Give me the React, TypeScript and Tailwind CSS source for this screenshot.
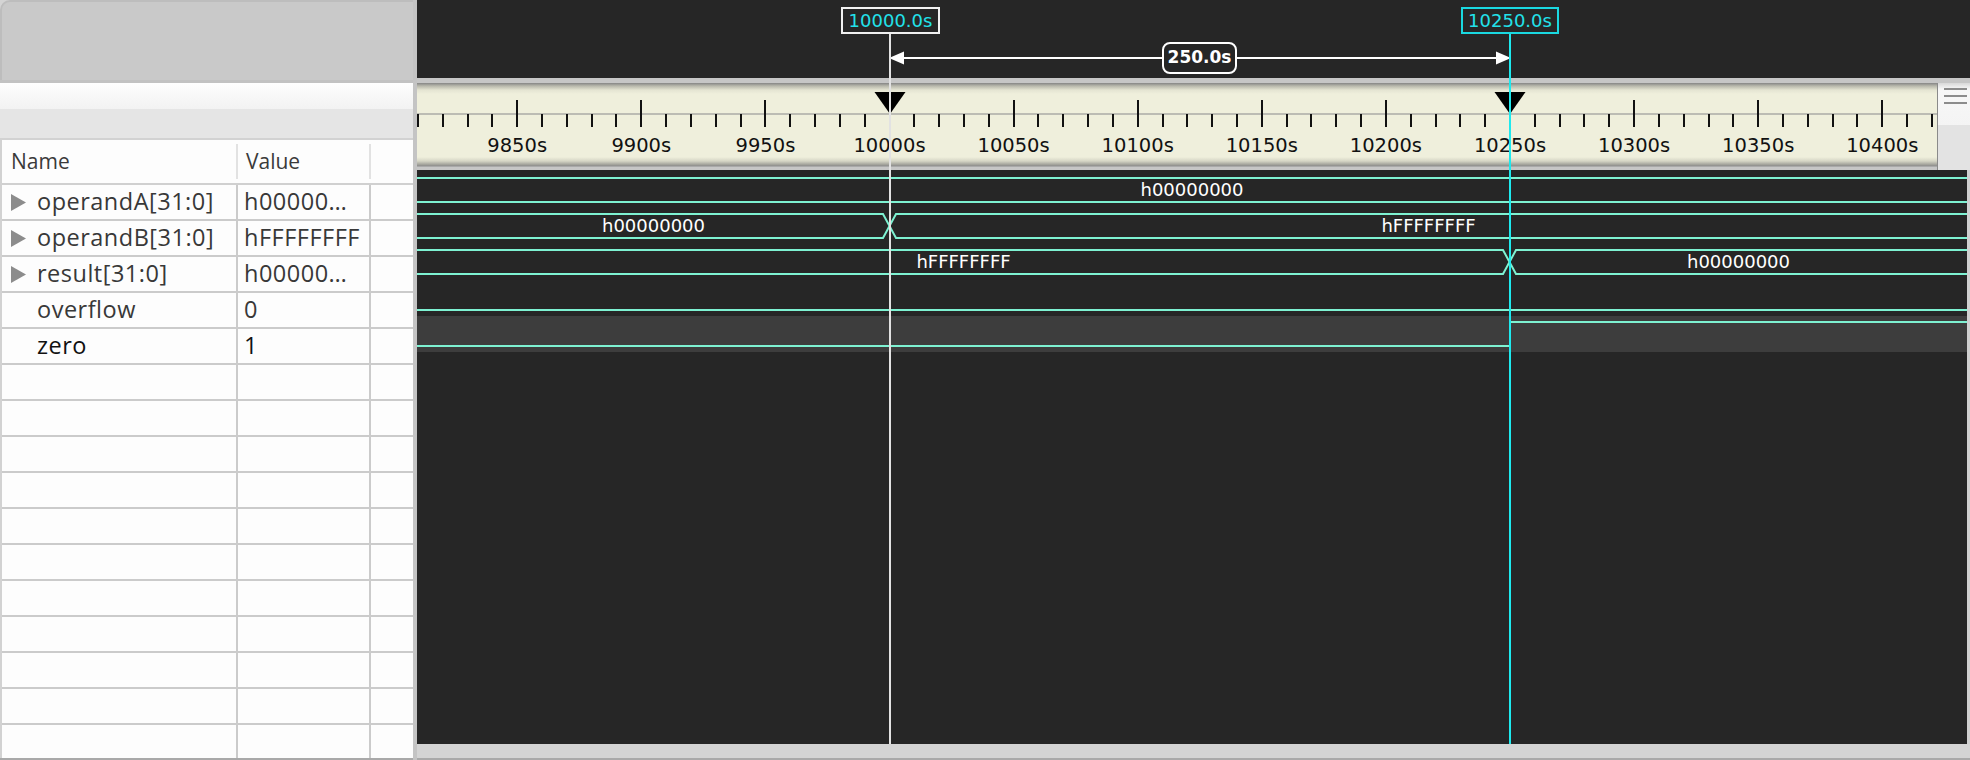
import React from 'react'

const T0 = 10000
const X0 = 472.5
const PX = 2.482
const tx = (t: number) => X0 + (t - T0) * PX

const C1 = 472
const C2 = 1092
const WAVE = '#7ef2d2'

const signals = [
  { name: 'operandA[31:0]', value: 'h00000…', bus: true },
  { name: 'operandB[31:0]', value: 'hFFFFFFFF', bus: true },
  { name: 'result[31:0]', value: 'h00000…', bus: true },
  { name: 'overflow', value: '0', bus: false },
  { name: 'zero', value: '1', bus: false, selected: true },
]

function Caret() {
  return (
    <svg width="15" height="17" viewBox="0 0 15 17" className="shrink-0">
      <polygon points="0,0 15,8.5 0,17" fill="#8c8c8c" />
    </svg>
  )
}

function SignalTable() {
  const rows = Array.from({ length: 16 }, (_, i) => signals[i])
  return (
    <div className="flex-1 flex flex-col overflow-hidden border-l-2 border-t-2 border-[#d2d2d2] bg-[#fdfdfd] font-['Open_Sans',sans-serif]">
      <div className="h-[45px] shrink-0 flex items-center border-b-2 border-[#d0d0d0] text-[21px] text-[#3a3a3a]">
        <div className="w-[236px] h-[35px] flex items-center pl-[9px] border-r-2 border-[#e2e2e2]">Name</div>
        <div className="w-[133px] h-[35px] flex items-center pl-[8px] border-r-2 border-[#e2e2e2]">Value</div>
        <div className="flex-1" />
      </div>
      {rows.map((s, i) => (
        <div key={i} className="h-[36px] shrink-0 flex border-b-2 border-[#cbcbcb] text-[23.5px] tracking-[0.5px]">
          <div className="w-[236px] flex items-center pl-[9px] gap-[11px] border-r-2 border-[#cbcbcb] whitespace-nowrap">
            {s && (s.bus ? <Caret /> : <span className="w-[15px]" />)}
            {s && <span className={s.selected ? 'text-[#111]' : 'text-[#383838]'}>{s.name}</span>}
          </div>
          <div className={`w-[133px] flex items-center pl-[6px] border-r-2 border-[#cbcbcb] whitespace-nowrap overflow-hidden ${s?.selected ? 'text-[#111]' : 'text-[#383838]'}`}>
            {s?.value}
          </div>
          <div className="flex-1" />
        </div>
      ))}
    </div>
  )
}

function Ruler() {
  const ticks: number[] = []
  for (let t = 9810; t <= 10420; t += 10) ticks.push(t)
  return (
    <div className="w-[1520px] h-[87px] bg-[linear-gradient(180deg,#858585_0px,#b8b8ac_3px,#e4e4d2_7px,#efefdc_11px,#efefdc_74px,#d6d6c6_78px,#9c9c96_82px,#8c8c8c_83px,#c6c6c6_84px,#c6c6c6_87px)]">
      <svg width={1520} height={87} className="block">
        <rect x={0} y={30} width={1520} height={2} fill="#bcbcb4" />
        {ticks.map((t) => {
          const x = Math.round(tx(t))
          const major = t % 50 === 0
          return <rect key={t} x={x - 1} y={major ? 17 : 31} width={2} height={major ? 27 : 13} fill="#111" />
        })}
        {ticks
          .filter((t) => t % 50 === 0)
          .map((t) => (
            <text key={t} x={tx(t)} y={69} textAnchor="middle" fontFamily="DejaVu Sans, sans-serif" fontSize={19.5} fill="#111">
              {t}s
            </text>
          ))}
        {[C1 + 1, C2 + 1].map((x) => (
          <polygon key={x} points={`${x - 15.5},9 ${x + 15.5},9 ${x},31`} fill="#000" />
        ))}
      </svg>
    </div>
  )
}

function Waves() {
  const W = 1550
  const lbl = (x: number, y: number, t: string) => (
    <text x={x} y={y} textAnchor="middle" fontFamily="DejaVu Sans, sans-serif" fontSize={18} fill="#fff">
      {t}
    </text>
  )
  const a = C1 + 1
  const b = C2 + 1
  return (
    <svg width={W} height={574} className="block">
      <rect x={0} y={146} width={W} height={36} fill="#3d3d3d" />
      <g stroke={WAVE} strokeWidth={2} fill="none">
        {/* operandA */}
        <path d={`M0,8 H${W} M0,32 H${W}`} />
        {/* operandB */}
        <path d={`M0,44 H${a - 7} L${a + 6},68 H${W} M0,68 H${a - 7} L${a + 6},44 H${W}`} />
        {/* result */}
        <path d={`M0,80 H${b - 7} L${b + 6},104 H${W} M0,104 H${b - 7} L${b + 6},80 H${W}`} />
        {/* overflow */}
        <path d={`M0,140 H${W}`} />
        {/* zero */}
        <path d={`M0,176 H${b} V152 H${W}`} />
      </g>
      {lbl(W / 2, 26, 'h00000000')}
      {lbl(a / 2, 62, 'h00000000')}
      {lbl((a + W) / 2, 62, 'hFFFFFFFF')}
      {lbl(b / 2, 98, 'hFFFFFFFF')}
      {lbl((b + W) / 2, 98, 'h00000000')}
    </svg>
  )
}

export default function App() {
  return (
    <div className="w-[1970px] h-[760px] flex overflow-hidden bg-[#d4d4d4]">
      {/* left: signal list */}
      <div className="w-[413px] h-full flex flex-col">
        <div className="h-[80px] shrink-0 bg-[#c9c9c9] rounded-tl-[10px] border-l-2 border-t-2 border-[#bdbdbd]" />
        <div className="h-[3px] shrink-0 bg-[#c2c2c2]" />
        <div className="h-[26px] shrink-0 bg-[linear-gradient(180deg,#fefefe,#f2f2f2)]" />
        <div className="h-[29px] shrink-0 bg-[#e5e5e5]" />
        <SignalTable />
        <div className="h-[2px] shrink-0 bg-[#a9a9a9]" />
      </div>
      <div className="w-[4px] h-full bg-[#c4c4c4]" />

      {/* right: waveform view */}
      <div className="relative flex-1 h-full flex flex-col bg-[#262626]">
        <div className="relative h-[78px] shrink-0">
          <svg width={1553} height={78} className="absolute inset-0">
            <rect x={C1 + 13} y={57} width={C2 - C1 - 25} height={2} fill="#fff" />
            <polygon points={`${C1},58 ${C1 + 15},51.5 ${C1 + 15},64.5`} fill="#fff" />
            <polygon points={`${C2 + 2},58 ${C2 - 13},51.5 ${C2 - 13},64.5`} fill="#fff" />
          </svg>
          <div className="absolute left-[424px] top-[7px] w-[99px] h-[27px] border-2 border-[#f0f0f0] flex items-center justify-center font-['DejaVu_Sans',sans-serif] text-[18px] text-[#22e2ea]">
            10000.0s
          </div>
          <div className="absolute left-[1044px] top-[7px] w-[98px] h-[27px] border-2 border-[#1ad8e0] flex items-center justify-center font-['DejaVu_Sans',sans-serif] text-[18px] text-[#22e2ea]">
            10250.0s
          </div>
          <div className="absolute left-[745px] top-[42px] w-[75px] h-[32px] rounded-[8px] border-2 border-white bg-[#262626] flex items-center justify-center font-['DejaVu_Sans',sans-serif] font-bold text-[17px] text-white">
            250.0s
          </div>
        </div>
        <div className="h-[5px] shrink-0 bg-[#c6c6c6]" />
        <div className="h-[87px] shrink-0 flex">
          <Ruler />
          <div className="flex-1 flex flex-col border-l border-[#8a8a8a]">
            <div className="h-[42px] bg-[linear-gradient(180deg,#d8d8d8,#f7f7f7_6px,#f4f4f4)] flex flex-col gap-[5px] pl-[6px] pr-[3px] pt-[5px]">
              <div className="h-[2px] bg-[#8c8c8c]" />
              <div className="h-[2px] bg-[#8c8c8c]" />
              <div className="h-[2px] bg-[#8c8c8c]" />
            </div>
            <div className="flex-1 bg-[#e3e3e3]" />
          </div>
        </div>
        <div className="flex-1 flex overflow-hidden">
          <Waves />
          <div className="flex-1 bg-[#d0d0d0]" />
        </div>
        <div className="h-[14px] shrink-0 bg-[#d4d4d4]" />
        <div className="h-[2px] shrink-0 bg-[#a9a9a9]" />

        {/* cursors */}
        <svg width={1553} height={760} className="absolute inset-0 pointer-events-none">
          <rect x={C1} y={34} width={2} height={710} fill="#e2e2e2" />
          <rect x={C2} y={34} width={2} height={710} fill="#1ee9ee" />
        </svg>
      </div>
    </div>
  )
}
